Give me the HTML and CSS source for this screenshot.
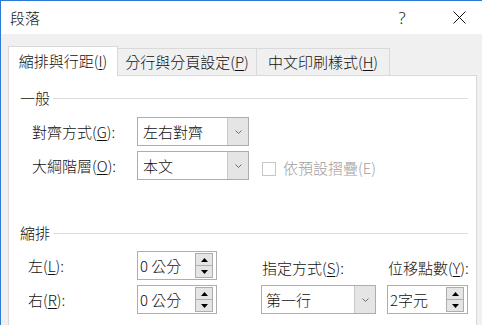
FILE: index.html
```html
<!DOCTYPE html>
<html lang="zh-Hant">
<head>
  <meta charset="UTF-8">
  <title>段落</title>
  <link rel="stylesheet" href="styles.css">
</head>
<body>
  <div class="window">
    <header class="titlebar">
      <div class="title">段落</div>
      <div class="caption-buttons">
        <span class="help">?</span>
        <span class="close">
          <svg width="13" height="13" viewBox="0 0 13 13"><path d="M0.5 0.5 L12.5 12.5 M12.5 0.5 L0.5 12.5" stroke="#111" stroke-width="1"/></svg>
        </span>
      </div>
    </header>

    <div class="dialog">
      <div class="tabs">
        <div class="tab active tab-indent">縮排與行距(<u>I</u>)</div>
        <div class="tab tab-breaks">分行與分頁設定(<u>P</u>)</div>
        <div class="tab tab-asian">中文印刷樣式(<u>H</u>)</div>
      </div>

      <div class="panel">
        <div class="section-head"><span>一般</span><div class="rule"></div></div>

        <div class="form-row first">
          <label class="field-label">對齊方式(<u>G</u>):</label>
          <div class="combo">
            <span class="combo-value">左右對齊</span>
            <span class="combo-btn"><svg width="7" height="4" viewBox="0 0 7 4"><polyline points="0.5,0.5 3.5,3.5 6.5,0.5" fill="none" stroke="#6d6d6d" stroke-width="1"/></svg></span>
          </div>
        </div>

        <div class="form-row">
          <label class="field-label">大綱階層(<u>O</u>):</label>
          <div class="combo">
            <span class="combo-value">本文</span>
            <span class="combo-btn"><svg width="7" height="4" viewBox="0 0 7 4"><polyline points="0.5,0.5 3.5,3.5 6.5,0.5" fill="none" stroke="#6d6d6d" stroke-width="1"/></svg></span>
          </div>
          <span class="checkbox disabled"></span>
          <span class="check-label">依預設摺疊(E)</span>
        </div>

        <div class="section-head indent-head"><span>縮排</span><div class="rule"></div></div>

        <div class="indent-grid">
          <label class="field-label">左(<u>L</u>):</label>
          <div class="spinner">
            <span class="spin-value">0 公分</span>
            <span class="spin-btns">
              <span class="spin-up"><svg width="7" height="4" viewBox="0 0 7 4"><polygon points="0,4 3.5,0 7,4" fill="#000"/></svg></span>
              <span class="spin-down"><svg width="7" height="4" viewBox="0 0 7 4"><polygon points="0,0 3.5,4 7,0" fill="#000"/></svg></span>
            </span>
          </div>
          <label class="field-label col-label">指定方式(<u>S</u>):</label>
          <label class="field-label col-label">位移點數(<u>Y</u>):</label>

          <label class="field-label">右(<u>R</u>):</label>
          <div class="spinner">
            <span class="spin-value">0 公分</span>
            <span class="spin-btns">
              <span class="spin-up"><svg width="7" height="4" viewBox="0 0 7 4"><polygon points="0,4 3.5,0 7,4" fill="#000"/></svg></span>
              <span class="spin-down"><svg width="7" height="4" viewBox="0 0 7 4"><polygon points="0,0 3.5,4 7,0" fill="#000"/></svg></span>
            </span>
          </div>
          <div class="combo special">
            <span class="combo-value">第一行</span>
            <span class="combo-btn"><svg width="7" height="4" viewBox="0 0 7 4"><polyline points="0.5,0.5 3.5,3.5 6.5,0.5" fill="none" stroke="#6d6d6d" stroke-width="1"/></svg></span>
          </div>
          <div class="spinner by">
            <span class="spin-value">2字元</span>
            <span class="spin-btns">
              <span class="spin-up"><svg width="7" height="4" viewBox="0 0 7 4"><polygon points="0,4 3.5,0 7,4" fill="#000"/></svg></span>
              <span class="spin-down"><svg width="7" height="4" viewBox="0 0 7 4"><polygon points="0,0 3.5,4 7,0" fill="#000"/></svg></span>
            </span>
          </div>
        </div>
      </div>
    </div>
  </div>
</body>
</html>
```

FILE: styles.css
```css
body {
  margin: 0;
  padding: 0;
  font-family: "Noto Sans CJK TC", "Noto Sans", sans-serif;
  font-size: 15px;
  font-weight: 300;
  line-height: 20px;
  color: #111;
  background-color: #f0f0f0;
  overflow: hidden;
}
u {
  text-decoration: underline;
  text-underline-offset: 2px;
}
.window {
  width: 482px;
  height: 325px;
  box-sizing: border-box;
  border-top: 1px solid #2b7bd6;
  border-left: 1px solid #2b7bd6;
  background-color: #f0f0f0;
  overflow: hidden;
}
.titlebar {
  height: 33px;
  background-color: #fff;
  display: flex;
  justify-content: space-between;
  align-items: center;
}
.title {
  padding-left: 9px;
}
.caption-buttons {
  display: flex;
  align-items: center;
  height: 100%;
}
.help {
  width: 46px;
  margin-right: 11px;
  text-align: center;
  font-family: "Noto Sans", sans-serif;
  font-weight: 300;
  font-size: 17px;
  color: #222;
}
.close {
  width: 46px;
  height: 100%;
  display: flex;
  align-items: center;
  justify-content: center;
}
.dialog {
  padding: 12px 5px 0 7px;
}
.tabs {
  display: flex;
  align-items: flex-end;
  height: 29px;
}
.tab {
  box-sizing: border-box;
  height: 27px;
  border: 1px solid #d9d9d9;
  border-bottom: none;
  background-color: #f0f0f0;
  display: flex;
  align-items: center;
  justify-content: center;
  margin-left: -1px;
}
.tab.active {
  position: relative;
  z-index: 1;
  height: 30px;
  margin-bottom: -1px;
  margin-left: 0;
  background-color: #fff;
  padding-bottom: 1px;
}
.tab-indent { width: 110px; }
.tab-breaks { width: 140px; }
.tab-asian { width: 134px; }
.panel {
  border: 1px solid #d9d9d9;
  background-color: #fff;
  height: 300px;
  padding-top: 12px;
  box-sizing: border-box;
}
.section-head {
  display: flex;
  align-items: center;
  gap: 3px;
  height: 20px;
  margin: 0 8px 0 11px;
}
.section-head .rule {
  flex: 1;
  height: 1px;
  background-color: #dcdcdc;
}
.indent-head {
  margin-top: 43px;
}
.form-row {
  display: flex;
  align-items: center;
  height: 29px;
  padding-left: 23px;
  margin-top: 5px;
}
.form-row.first {
  margin-top: 9px;
}
.field-label {
  width: 105px;
  flex-shrink: 0;
}
.combo {
  box-sizing: border-box;
  width: 112px;
  height: 29px;
  border: 1px solid #adadad;
  background-color: #fff;
  display: flex;
  align-items: stretch;
}
.combo-value {
  flex: 1;
  display: flex;
  align-items: center;
  padding-left: 5px;
}
.combo-btn {
  width: 20px;
  border-left: 1px solid #c9c9c9;
  background-color: #e5e5e5;
  display: flex;
  align-items: center;
  justify-content: center;
}
.checkbox {
  box-sizing: border-box;
  width: 14px;
  height: 14px;
  margin: 7px 0 0 13px;
  border: 1px solid #c6c6c6;
  background-color: #fff;
}
.check-label {
  margin: 5px 0 0 7px;
  color: #a0a0a0;
}
.indent-grid {
  display: grid;
  grid-template-columns: 109px 124px 126px 81px;
  grid-template-rows: 29px 29px;
  row-gap: 5px;
  align-items: center;
  margin-top: 8px;
  padding-left: 19px;
}
.col-label {
  padding: 4px 0 0 1px;
}
.spinner {
  box-sizing: border-box;
  width: 80px;
  height: 29px;
  border: 1px solid #adadad;
  background-color: #fff;
  display: flex;
  align-items: center;
  padding: 0 3px 0 2px;
}
.spinner.by {
  width: 81px;
}
.spin-value {
  flex: 1;
}
.spin-btns {
  box-sizing: border-box;
  width: 18px;
  height: 25px;
  border: 1px solid #adadad;
  display: flex;
  flex-direction: column;
}
.spin-up,
.spin-down {
  flex: 1;
  background-color: #e5e5e5;
  display: flex;
  align-items: center;
  justify-content: center;
}
.spin-up {
  border-bottom: 1px solid #adadad;
}
.combo.special {
  width: 115px;
}
.combo.special .combo-value {
  padding-left: 4px;
}
```
